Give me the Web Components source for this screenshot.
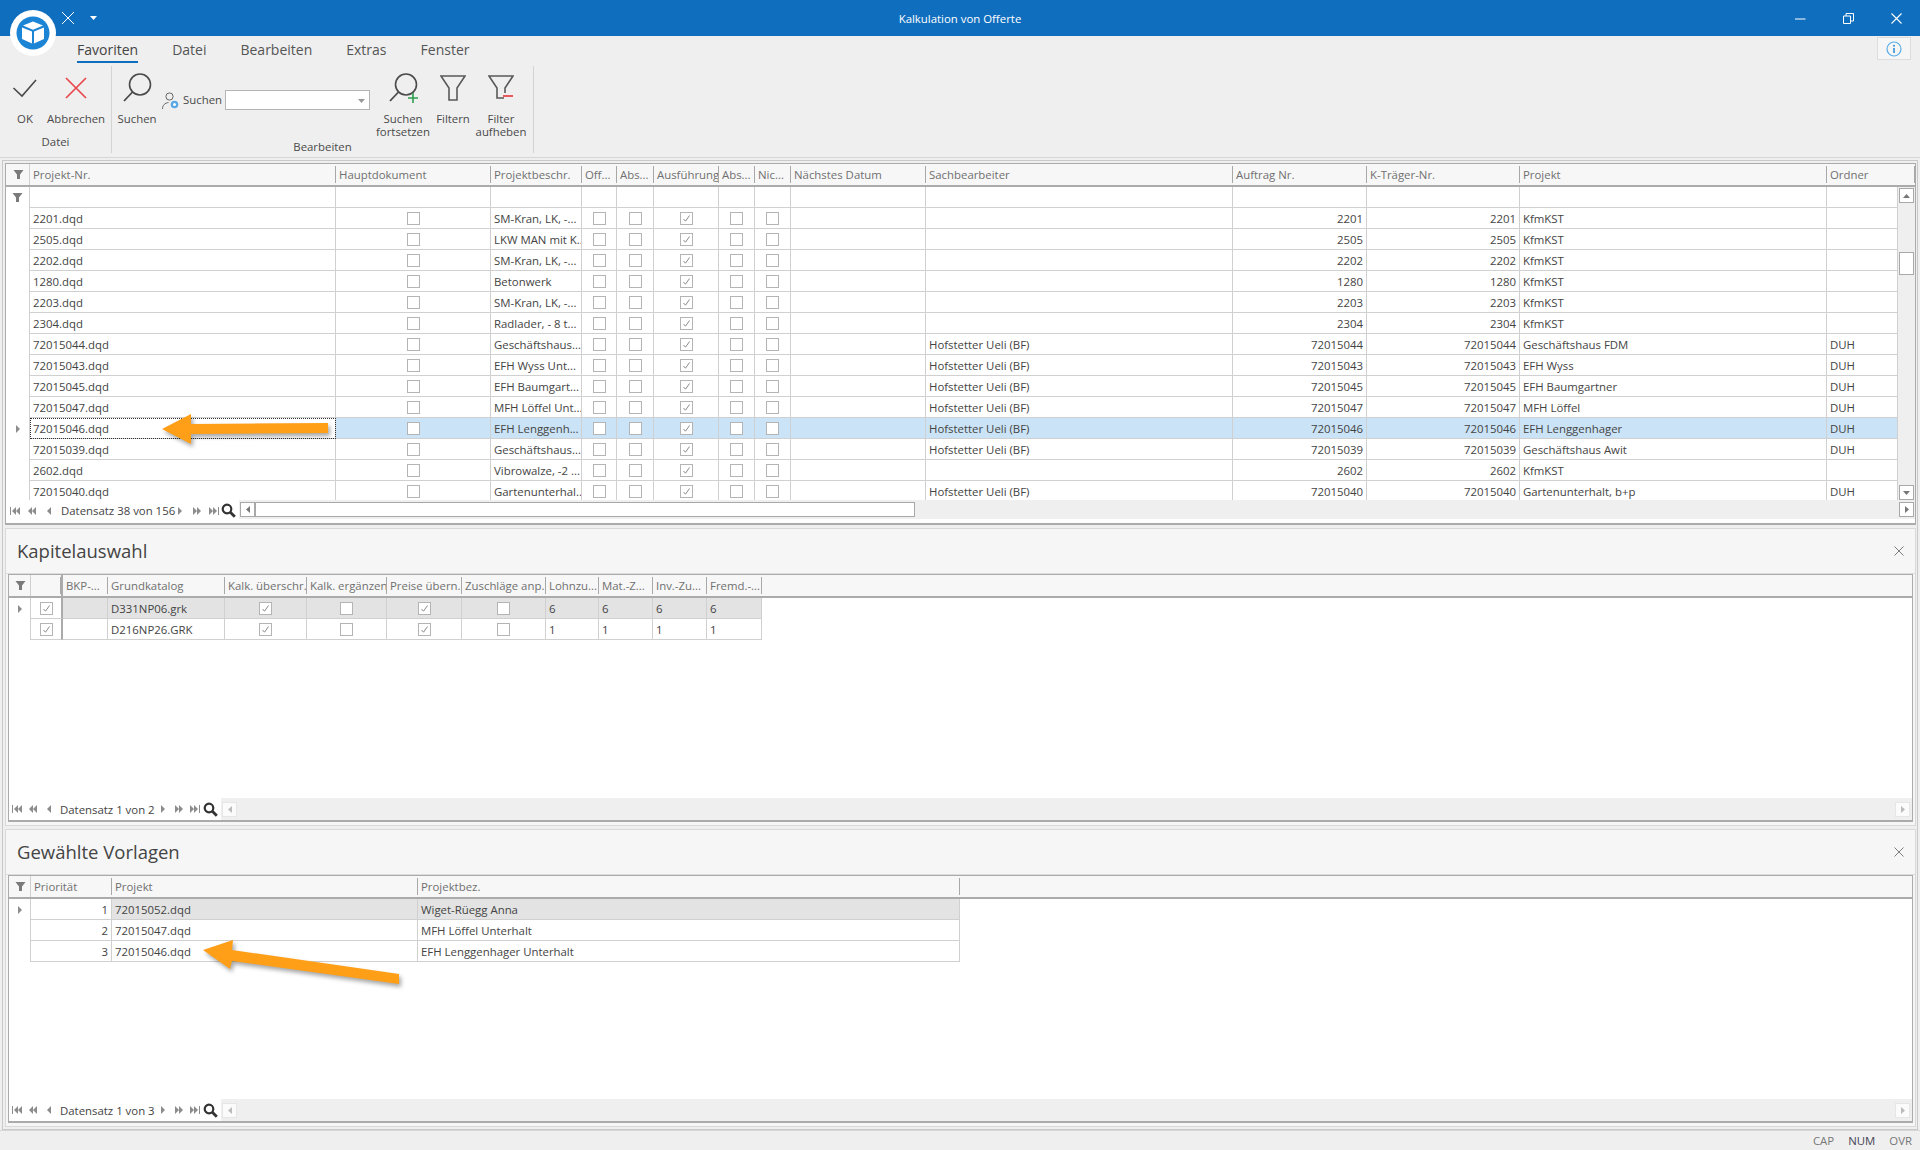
<!DOCTYPE html>
<html lang="de">
<head>
<meta charset="utf-8">
<title>Kalkulation von Offerte</title>
<style>
    html, body { margin: 0; height: 100%; overflow: hidden; background: #efefef; }
    body { font: 11.4px "Open Sans", "Liberation Sans", sans-serif; color: #444; display: flex; flex-direction: column; width: 1920px; height: 1150px; position: relative; }
</style>
</head>
<body>
<title-bar caption="Kalkulation von Offerte"></title-bar>
<app-ribbon></app-ribbon>
<main-frame>
    <data-grid source="projects" style="height:362px"></data-grid>
    <tool-panel caption="Kapitelauswahl" style="height:298px"><data-grid source="chapters"></data-grid></tool-panel>
    <tool-panel caption="Gewählte Vorlagen" style="height:298px"><data-grid source="templates"></data-grid></tool-panel>
</main-frame>
<status-bar></status-bar>
<arrow-overlay></arrow-overlay>

<script>
const HOF = 'Hofstetter Ueli (BF)';
const prj = (nr, beschr, who, num, projekt, ordner) =>
    [nr + '.dqd', false, beschr, false, false, true, false, false, '', who, num, num, projekt, ordner];

const GRIDS = {
    projects: {
        filterRow: true, scrollbar: true, selected: 10, frozen: 0, fill: true,
        nav: { label: 'Datensatz 38 von 156', thumb: 660, active: true },
        indicator: 24,
        columns: [
            ['Projekt-Nr.', 306], ['Hauptdokument', 155, 'c'], ['Projektbeschr.', 91], ['Off...', 35, 'c'], ['Abs...', 37, 'c'],
            ['Ausführung', 65, 'c'], ['Abs...', 36, 'c'], ['Nic...', 36, 'c'], ['Nächstes Datum', 135], ['Sachbearbeiter', 307],
            ['Auftrag Nr.', 134, 'r'], ['K-Träger-Nr.', 153, 'r'], ['Projekt', 307], ['Ordner', 0]
        ],
        rows: [
            prj('2201', 'SM-Kran, LK, -...', '', '2201', 'KfmKST', ''),
            prj('2505', 'LKW MAN mit K...', '', '2505', 'KfmKST', ''),
            prj('2202', 'SM-Kran, LK, -...', '', '2202', 'KfmKST', ''),
            prj('1280', 'Betonwerk', '', '1280', 'KfmKST', ''),
            prj('2203', 'SM-Kran, LK, -...', '', '2203', 'KfmKST', ''),
            prj('2304', 'Radlader, - 8 t...', '', '2304', 'KfmKST', ''),
            prj('72015044', 'Geschäftshaus...', HOF, '72015044', 'Geschäftshaus FDM', 'DUH'),
            prj('72015043', 'EFH Wyss Unt...', HOF, '72015043', 'EFH Wyss', 'DUH'),
            prj('72015045', 'EFH Baumgart...', HOF, '72015045', 'EFH Baumgartner', 'DUH'),
            prj('72015047', 'MFH Löffel Unt...', HOF, '72015047', 'MFH Löffel', 'DUH'),
            prj('72015046', 'EFH Lenggenh...', HOF, '72015046', 'EFH Lenggenhager', 'DUH'),
            prj('72015039', 'Geschäftshaus...', HOF, '72015039', 'Geschäftshaus Awit', 'DUH'),
            prj('2602', 'Vibrowalze, -2 ...', '', '2602', 'KfmKST', ''),
            prj('72015040', 'Gartenunterhal...', HOF, '72015040', 'Gartenunterhalt, b+p', 'DUH')
        ]
    },
    chapters: {
        frozen: 1, selected: 0, thickFrozen: true,
        nav: { label: 'Datensatz 1 von 2' },
        indicator: 22,
        columns: [
            ['', 32, 'c'], ['BKP-...', 45], ['Grundkatalog', 117], ['Kalk. überschr.', 82, 'c'], ['Kalk. ergänzen', 80, 'c'],
            ['Preise übern.', 75, 'c'], ['Zuschläge anp.', 84, 'c'], ['Lohnzu...', 53], ['Mat.-Z...', 54], ['Inv.-Zu...', 54], ['Fremd.-...', 55]
        ],
        rows: [
            [true, '', 'D331NP06.grk', true, false, true, false, '6', '6', '6', '6'],
            [true, '', 'D216NP26.GRK', true, false, true, false, '1', '1', '1', '1']
        ]
    },
    templates: {
        frozen: 1, selected: 0,
        nav: { label: 'Datensatz 1 von 3' },
        indicator: 22,
        columns: [['Priorität', 81, 'r'], ['Projekt', 306], ['Projektbez.', 542]],
        rows: [
            ['1', '72015052.dqd', 'Wiget-Rüegg Anna'],
            ['2', '72015047.dqd', 'MFH Löffel Unterhalt'],
            ['3', '72015046.dqd', 'EFH Lenggenhager Unterhalt']
        ]
    }
};

const FUNNEL = `<svg width="11" height="11" viewBox="0 0 11 11"><path d="M.5 1h10L7 5.5V10H4V5.5z" fill="#7a7a7a"/></svg>`;
const CHECK = `<svg width="9" height="9" viewBox="0 0 9 9"><path d="M1.5 5l2 2.2L7.5 1.5" fill="none" stroke="#8a8a8a" stroke-width="1"/></svg>`;

class TitleBar extends HTMLElement {
    constructor() {
        super();
        this.attachShadow({ mode: 'open' });
    }

    connectedCallback() {
        this.shadowRoot.innerHTML = `
            <style>
                :host { display: flex; align-items: center; height: 36px; background: #106ebe; color: #fff; position: relative; flex: none; font-size: 11.4px; }
                .logo { position: absolute; left: 10px; top: 10px; z-index: 3; }
                .qat { display: flex; align-items: center; position: absolute; left: 61px; top: 11px; gap: 15px; }
                .caption { flex: 1; text-align: center; padding-left: -1px; }
                .win { display: flex; position: absolute; right: 0; top: 0; }
                .win span { width: 48px; height: 36px; display: flex; align-items: center; justify-content: center; }
            </style>
            <svg class="logo" width="46" height="46" viewBox="0 0 46 46">
                <circle cx="23" cy="23" r="23" fill="#fff"/>
                <circle cx="23" cy="23" r="16.5" fill="#1b84d4"/>
                <path d="M23 11.5l10 4-10 4.2-10-4.2z" fill="#fff"/>
                <path d="M12 17.4l10 4.2v12l-10-4.5zM34 17.4l-10 4.2v12l10-4.5z" fill="#fff"/>
            </svg>
            <div class="qat">
                <svg width="14" height="14" viewBox="0 0 14 14"><path d="M1 1l12 12M13 1L1 13" stroke="#fff" stroke-width="1" fill="none"/></svg>
                <svg width="7" height="4" viewBox="0 0 7 4"><path d="M0 0h7L3.5 4z" fill="#fff"/></svg>
            </div>
            <div class="caption">${this.getAttribute('caption')}</div>
            <div class="win">
                <span><svg width="11" height="11" viewBox="0 0 11 11"><path d="M0 6h10.5" stroke="#fff"/></svg></span>
                <span><svg width="11" height="11" viewBox="0 0 11 11"><path d="M.5 3h7v7.5h-7zM3 3V.5h7.5V8H8" fill="none" stroke="#fff"/></svg></span>
                <span><svg width="11" height="11" viewBox="0 0 11 11"><path d="M.5.5l10 10M10.5.5l-10 10" stroke="#fff" stroke-width="1.1"/></svg></span>
            </div>`;
    }
}

class RibbonButton extends HTMLElement {
    constructor() {
        super();
        this.attachShadow({ mode: 'open' });
        this.shadowRoot.innerHTML = `
            <style>
                :host { display: flex; flex-direction: column; align-items: center; flex: none; text-align: center; line-height: 13px; }
                .icon { height: 36px; margin-top: 4px; display: flex; justify-content: center; align-items: center; }
                .label { margin-top: 6px; }
            </style>
            <div class="icon"><slot name="icon"></slot></div>
            <div class="label"><slot></slot></div>`;
    }
}

class AppRibbon extends HTMLElement {
    constructor() {
        super();
        this.attachShadow({ mode: 'open' });
    }

    connectedCallback() {
        const lens = `<circle cx="19" cy="12.5" r="10.5" fill="none" stroke="#4a4a4a" stroke-width="1.6"/><path d="M11.5 20L3 29" stroke="#4a4a4a" stroke-width="1.8"/>`;
        this.shadowRoot.innerHTML = `
            <style>
                :host { display: block; height: 122px; flex: none; background: #efefef; border-bottom: 1px solid #d6d6d6; box-sizing: border-box; color: #4a4a4a; position: relative; }
                .tabs { display: flex; height: 30px; padding-left: 77px; font-size: 14px; color: #555; }
                .tabs span { height: 25px; line-height: 28px; margin-right: 34px; }
                .tabs span.on { color: #444; border-bottom: 2px solid #106ebe; }
                .groups { display: flex; height: 87px; }
                .group { display: flex; flex-direction: column; border-right: 1px solid #d4d4d4; flex: none; }
                .items { display: flex; flex: 1; }
                .name { text-align: center; height: 20px; line-height: 18px; }
                .field { display: flex; width: 208px; flex: none; align-items: flex-start; padding-top: 24px; box-sizing: border-box; gap: 4px; }
                .field svg { margin-top: 2px; flex: none; }
                .field b { font-weight: normal; line-height: 20px; }
                .combo { width: 149px; height: 20px; background: #fff; border: 1px solid #b5b5b5; box-sizing: border-box; display: flex; justify-content: flex-end; align-items: center; padding-right: 4px; margin-left: -1px; }
                .info { position: absolute; right: 9px; top: 1px; width: 34px; height: 23px; background: #f6f6f6; border: 1px solid #ddd; box-sizing: border-box; display: flex; align-items: center; justify-content: center; }
            </style>
            <div class="tabs">
                <span class="on">Favoriten</span><span>Datei</span><span>Bearbeiten</span><span>Extras</span><span>Fenster</span>
            </div>
            <div class="groups">
                <div class="group" style="width:111px">
                    <div class="items">
                        <ribbon-button style="width:50px"><svg slot="icon" width="26" height="20" viewBox="0 0 26 20"><path d="M1.5 10l8.5 8L24 2" fill="none" stroke="#4a4a4a" stroke-width="1.6"/></svg>OK</ribbon-button>
                        <ribbon-button style="width:52px"><svg slot="icon" width="24" height="24" viewBox="0 0 24 24"><path d="M2 2l20 20M22 2L2 22" fill="none" stroke="#e8474c" stroke-width="1.7"/></svg>Abbrechen</ribbon-button>
                    </div>
                    <div class="name">Datei</div>
                </div>
                <div class="group" style="width:421px">
                    <div class="items">
                        <ribbon-button style="width:50px"><svg slot="icon" width="32" height="32" viewBox="0 0 32 32">${lens}</svg>Suchen</ribbon-button>
                        <div class="field">
                            <svg width="17" height="18" viewBox="0 0 17 18"><circle cx="7.5" cy="4.5" r="3.6" fill="none" stroke="#666"/><path d="M.5 17c0-4 2.500-6 6-6.500" fill="none" stroke="#666"/><circle cx="12.500" cy="12.500" r="3.800" fill="#5aa9e6"/><circle cx="12.500" cy="12.500" r="1.500" fill="#fff"/></svg>
                            <b>Suchen</b>
                            <div class="combo"><svg width="7" height="4" viewBox="0 0 7 4"><path d="M0 0h7L3.500 4z" fill="#999"/></svg></div>
                        </div>
                        <ribbon-button style="width:66px"><svg slot="icon" width="32" height="32" viewBox="0 0 32 32">${lens}<path d="M21 26h10M26 21v10" stroke="#2e9e4f" stroke-width="1.600"/></svg>Suchen<br>fortsetzen</ribbon-button>
                        <ribbon-button style="width:34px"><svg slot="icon" width="26" height="26" viewBox="0 0 26 26"><path d="M1 1h24l-8 12v12H9V13z" fill="none" stroke="#5a5a5a" stroke-width="1.600"/></svg>Filtern</ribbon-button>
                        <ribbon-button style="width:62px"><svg slot="icon" width="26" height="26" viewBox="0 0 26 26"><path d="M16 23H9V13L1 1h24l-8 12v5" fill="none" stroke="#5a5a5a" stroke-width="1.600"/><path d="M15 21h10" stroke="#e8474c" stroke-width="1.800"/></svg>Filter<br>aufheben</ribbon-button>
                    </div>
                    <div class="name">Bearbeiten</div>
                </div>
            </div>
            <div class="info"><svg width="16" height="16" viewBox="0 0 16 16"><circle cx="8" cy="8" r="7" fill="none" stroke="#5aade8" stroke-width="1.200"/><path d="M8 7v5" stroke="#2f8fd8" stroke-width="1.600"/><circle cx="8" cy="4.700" r="1" fill="#2f8fd8"/></svg></div>`;
    }
}

class MainFrame extends HTMLElement {
    constructor() {
        super();
        this.attachShadow({ mode: 'open' });
        this.shadowRoot.innerHTML = `
            <style>
                :host { display: flex; flex-direction: column; gap: 3px; margin: 2px 2px 0 2px; height: 970px; flex: none; box-sizing: border-box; border: 1px solid #c9c9c9; border-bottom-width: 1px; padding: 2px 1px 2px 2px; }
            </style>
            <slot></slot>`;
    }
}

class ToolPanel extends HTMLElement {
    constructor() {
        super();
        this.attachShadow({ mode: 'open' });
    }

    connectedCallback() {
        this.shadowRoot.innerHTML = `
            <style>
                :host { display: flex; flex-direction: column; box-sizing: border-box; border: 1px solid #d9d9d9; background: #f6f6f6; padding: 0 2px 3px; flex: none; }
                .head { height: 45px; display: flex; align-items: center; justify-content: space-between; padding: 0 11px 0 11px; flex: none; box-sizing: border-box; margin: 0 -2px; border-bottom: 1px solid #dcdcdc; }
                .head span { font-size: 18.5px; color: #444; line-height: 1; }
                ::slotted(data-grid) { flex: 1; min-height: 0; }
            </style>
            <div class="head">
                <span>${this.getAttribute('caption')}</span>
                <svg width="10" height="10" viewBox="0 0 10 10"><path d="M.5.5l9 9M9.500.5l-9 9" stroke="#7d7d7d"/></svg>
            </div>
            <slot></slot>`;
    }
}

class GridNav extends HTMLElement {
    constructor() {
        super();
        this.attachShadow({ mode: 'open' });
    }

    connectedCallback() {
        const active = this.hasAttribute('active');
        const thumb = Number(this.getAttribute('thumb') || 0);
        const tri = (d, x) => `<path d="${d}" transform="translate(${x} 0)" fill="#8c8c8c"/>`;
        const left = x => tri('M4 0v8L0 4z', x);
        const right = x => tri('M0 0v8l4-4z', x);
        const btn = inner => `<span class="b"><svg width="10" height="8" viewBox="0 0 10 8">${inner}</svg></span>`;
        this.shadowRoot.innerHTML = `
            <style>
                :host { display: flex; height: ${active ? 23 : 22}px; flex: none; background: #fff; align-items: flex-start; color: #444; font-size: 11.4px; --bw: ${active ? 17 : 16}px; }
                .nav { display: flex; align-items: center; height: ${active ? 21 : 22}px; flex: none; }
                .b { width: var(--bw); display: flex; justify-content: center; flex: none; }
                .t { width: ${active ? 114 : 98}px; padding-left: ${active ? 4 : 3}px; box-sizing: border-box; flex: none; white-space: nowrap; }
                .mag { flex: none; margin: 0 ${active ? 3 : 3}px 0 ${active ? -1 : 0}px; display: block; }
                .bar { flex: 1; height: ${active ? 19 : 22}px; background: #efefef; display: flex; align-items: ${active ? 'center' : 'center'}; justify-content: space-between; padding: 0 ${active ? 1 : 2}px 0 1px; box-sizing: border-box; min-width: 0; }
                .sb { width: 15px; height: 15px; background: ${active ? '#fff' : '#fbfbfb'}; border: 1px solid ${active ? '#a8a8a8' : '#e6e6e6'}; box-sizing: border-box; display: flex; align-items: center; justify-content: center; flex: none; }
                .thumb { width: ${thumb}px; height: 15px; background: #fff; border: 1px solid #a8a8a8; box-sizing: border-box; flex: none; margin: 0 auto 0 0; }
                .sbs { display: flex; }
            </style>
            <div class="nav">
                ${btn('<path d="M0 0h1v8H0z" fill="#8c8c8c"/>' + left(2) + left(6))}
                ${btn(left(1) + left(5))}
                ${btn(left(3))}
                <span class="t">${this.getAttribute('label')}</span>
                ${btn(right(3))}
                ${btn(right(1) + right(5))}
                ${btn(right(0) + right(4) + '<path d="M9 0h1v8H9z" fill="#8c8c8c"/>')}
                <svg class="mag" width="15" height="15" viewBox="0 0 15 15"><circle cx="6" cy="6" r="4.300" fill="none" stroke="#333" stroke-width="2.200"/><path d="M9.300 9.300l4.500 4.500" stroke="#333" stroke-width="2.800"/></svg>
            </div>
            <div class="bar">
                <div class="sbs">
                    <span class="sb"><svg width="4" height="7" viewBox="0 0 4 7"><path d="M4 0v7L0 3.500z" fill="${active ? '#777' : '#bbb'}"/></svg></span>
                    ${thumb ? '<span class="thumb"></span>' : ''}
                </div>
                <span class="sb"><svg width="4" height="7" viewBox="0 0 4 7"><path d="M0 0v7l4-3.500z" fill="${active ? '#777' : '#bbb'}"/></svg></span>
            </div>`;
    }
}

class DataGrid extends HTMLElement {
    constructor() {
        super();
        this.attachShadow({ mode: 'open' });
    }

    connectedCallback() {
        const cfg = GRIDS[this.getAttribute('source')];
        const tpl = cfg.columns.map(c => c[1] ? c[1] + 'px' : '1fr').join(' ');
        const wide = cfg.scrollbar;
        this.shadowRoot.innerHTML = `
            <style>
                :host { display: flex; flex-direction: column; box-sizing: border-box; border: 1px solid #ababab; border-width: 1px 1px 2px; background: #fff; flex: none; overflow: hidden; color: #444; font-size: 11.4px; }
                .row { display: grid; grid-template-columns: ${cfg.indicator}px ${tpl}; height: 21px; box-sizing: border-box; ${wide ? '' : 'width: max-content;'} }
                .head { height: 23px; background: #f7f7f7; color: #707070; border-bottom: 2px solid #ababab; width: auto; flex: none; }
                .head > div { display: flex; align-items: center; padding-left: 3px; white-space: nowrap; overflow: hidden; position: relative; }
                .head > div::after { content: ""; position: absolute; right: 0; top: 2px; bottom: 2px; width: 1px; background: #a8a8a8; }
                .head > div.ind { justify-content: center; padding: 0; }
                .head > div.ind::after { top: 0; bottom: 0; background: #d0d0d0; }
                .body { display: flex; flex: 1; min-height: 0; }
                .rows { flex: 1; overflow: hidden; min-width: 0; }
                .c { display: flex; align-items: center; padding: 0 3px 0 3px; border-right: 1px solid #d0d0d0; border-bottom: 1px solid #d0d0d0; white-space: nowrap; overflow: hidden; box-sizing: border-box; height: 21px; }
                .c.cen { justify-content: center; padding: 0; }
                .c.r { justify-content: flex-end; }
                .c.ind { justify-content: center; padding: 0; border-bottom: 0; background: #fff; }
                .sel .c:not(.ind) { background: #e3e3e3; }
                .sel .c.frz { background: #fff; }
                .cur .c:not(.ind) { background: #cbe3f6; border-color: #d0d0d0; }
                .cur .c.focus { background: #fff; outline: 1px dotted #333; outline-offset: -1px; }
                .thick { border-right: 2px solid #ababab; }
                .box { width: 13px; height: 13px; border: 1px solid #b4b4b4; background: #fff; box-sizing: border-box; display: flex; align-items: center; justify-content: center; }
                .tip { width: 0; height: 0; border-left: 4px solid #8c8c8c; border-top: 4px solid transparent; border-bottom: 4px solid transparent; }
                .vbar { width: 17px; flex: none; background: #efefef; position: relative; display: flex; flex-direction: column; align-items: center; justify-content: space-between; padding: 1px 0 0; box-sizing: border-box; }
                .vb { width: 15px; height: 15px; background: #fff; border: 1px solid #a8a8a8; box-sizing: border-box; display: flex; align-items: center; justify-content: center; }
                .vthumb { position: absolute; top: 65px; left: 1px; width: 15px; height: 23px; background: #fff; border: 1px solid #a8a8a8; box-sizing: border-box; }
                .pad { height: 0; }
            </style>
            <div class="row head">
                <div class="ind">${FUNNEL}</div>
                ${cfg.columns.map((c, i) => `<div class="${i === 0 && cfg.thickFrozen ? 'thick' : ''}">${c[0]}</div>`).join('')}
            </div>
            <div class="body">
                <div class="rows">
                    ${cfg.filterRow ? this.filterRow(cfg) : ''}
                    ${cfg.rows.map((r, i) => this.dataRow(cfg, r, i)).join('')}
                </div>
                ${cfg.scrollbar ? `<div class="vbar">
                    <span class="vb"><svg width="7" height="4" viewBox="0 0 7 4"><path d="M3.500 0L7 4H0z" fill="#777"/></svg></span>
                    <span class="vthumb"></span>
                    <span class="vb"><svg width="7" height="4" viewBox="0 0 7 4"><path d="M0 0h7L3.500 4z" fill="#777"/></svg></span>
                </div>` : ''}
            </div>
            <grid-nav label="${cfg.nav.label}" ${cfg.nav.thumb ? `thumb="${cfg.nav.thumb}"` : ''} ${cfg.nav.active ? 'active' : ''}></grid-nav>`;
    }

    filterRow(cfg) {
        return `<div class="row"><div class="c ind">${FUNNEL}</div>${cfg.columns.map(() => '<div class="c"></div>').join('')}</div>`;
    }

    dataRow(cfg, row, idx) {
        const picked = idx === cfg.selected;
        const rowClass = picked ? (cfg.frozen ? 'sel' : 'cur') : '';
        const cells = row.map((val, i) => {
            const align = cfg.columns[i][2];
            const extra = [];
            if (i < cfg.frozen) extra.push('frz');
            if (i === 0 && cfg.thickFrozen) extra.push('thick');
            if (i === 0 && !cfg.frozen) extra.push('focus');
            if (typeof val === 'boolean') {
                return `<div class="c cen ${extra.join(' ')}"><span class="box">${val ? CHECK : ''}</span></div>`;
            }
            if (align === 'r') extra.push('r');
            return `<div class="c ${extra.join(' ')}">${val}</div>`;
        }).join('');
        return `<div class="row ${rowClass}"><div class="c ind">${picked ? '<span class="tip"></span>' : ''}</div>${cells}</div>`;
    }
}

class StatusBar extends HTMLElement {
    constructor() {
        super();
        this.attachShadow({ mode: 'open' });
        this.shadowRoot.innerHTML = `
            <style>
                :host { display: flex; justify-content: flex-end; align-items: center; flex: 1; gap: 14px; padding: 0 8px 0 0; background: #efefef; color: #777; font-size: 11.4px; border-top: 1px solid #d6d6d6; box-sizing: border-box; }
                .on { color: #445; }
            </style>
            <span>CAP</span><span class="on">NUM</span><span>OVR</span>`;
    }
}

// the two hand drawn arrows lie over the grids
class ArrowOverlay extends HTMLElement {
    constructor() {
        super();
        this.attachShadow({ mode: 'open' });
        this.shadowRoot.innerHTML = `
            <style>
                :host { position: absolute; left: 0; top: 0; width: 1920px; height: 1150px; pointer-events: none; z-index: 5; display: block; }
                svg { filter: drop-shadow(2px 3px 2px rgba(0,0,0,.35)); display: block; }
            </style>
            <svg width="1920" height="1150" viewBox="0 0 1920 1150">
                <path d="M162 429L191 414v10l137-1v10l-137 1v10z" fill="#ff9f17"/>
                <path d="M203 950l30-10-1 10 167 24v10L232 961l-2 8z" fill="#ff9f17"/>
            </svg>`;
    }
}

customElements.define('title-bar', TitleBar);
customElements.define('ribbon-button', RibbonButton);
customElements.define('app-ribbon', AppRibbon);
customElements.define('main-frame', MainFrame);
customElements.define('tool-panel', ToolPanel);
customElements.define('grid-nav', GridNav);
customElements.define('data-grid', DataGrid);
customElements.define('status-bar', StatusBar);
customElements.define('arrow-overlay', ArrowOverlay);
</script>
</body>
</html>
